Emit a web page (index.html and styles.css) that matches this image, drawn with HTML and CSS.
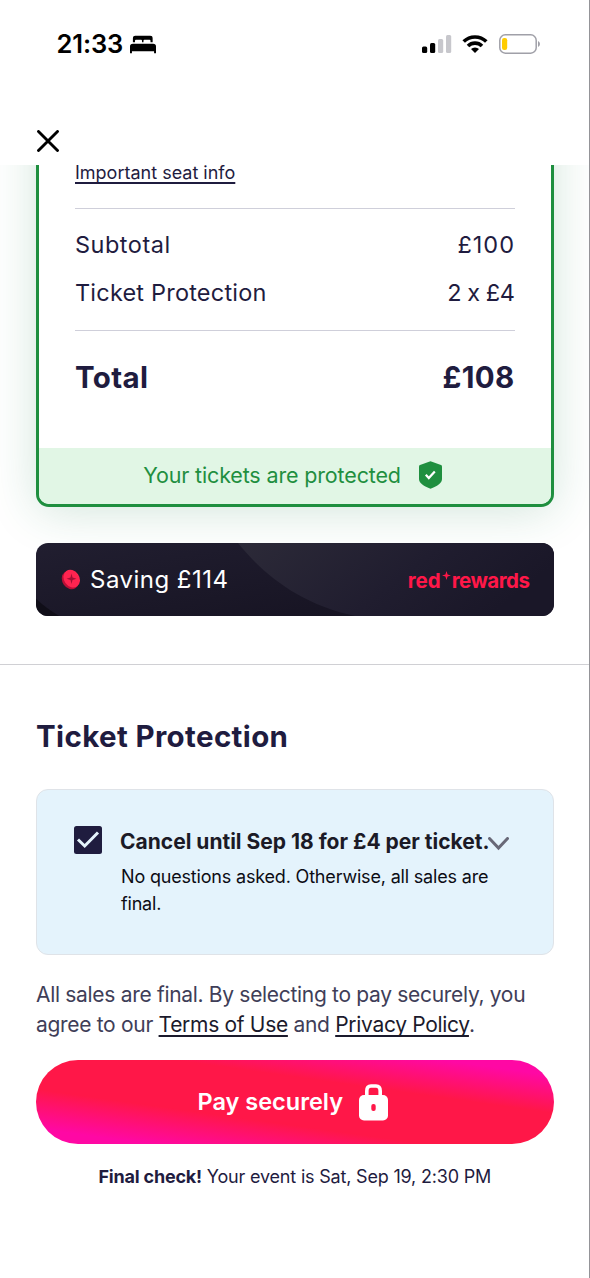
FILE: index.html
```html
<!DOCTYPE html>
<html lang="en">
<head>
<meta charset="utf-8">
<title>Checkout</title>
<link rel="stylesheet" href="styles.css">
</head>
<body>
<div class="screen">
  <header class="top">
    <div class="status">
      <span class="time">21:33</span>
      <svg class="bed" width="26" height="19" viewBox="0 0 27 19"><path d="M3 8V3.200C3 1.200 4 .5 5.500 .5h15.500C22.700 .5 23.500 1.200 23.500 3.200V7.200h-2.200V5.500q0-1-1-1h-5.300q-1 0-1 1v1.700h-1.500V5.500q0-1-1-1H6.200q-1 0-1 1v1.700H3z"/><path d="M0 18.500V11.500Q0 8.600 3 8.600h21q3 0 3 2.900v7h-2V16.500H2v2z"/></svg>
      <span class="grow"></span>
      <svg class="signal" width="30" height="20" viewBox="0 0 30 20"><g fill="#000"><rect x="0" y="12.500" width="5.200" height="6.500" rx="1.500"/><rect x="8" y="9" width="5.200" height="10" rx="1.500"/></g><g fill="#c7c7cc"><rect x="16" y="5" width="5.200" height="14" rx="1.500"/><rect x="24" y="1" width="5.200" height="18" rx="1.500"/></g></svg>
      <svg class="wifi" width="26" height="20" viewBox="0 0 26 20"><g fill="none" stroke="#000" stroke-width="3.600"><path d="M1.700 7.600a16 16 0 0 1 22.600 0"/><path d="M6 12a10 10 0 0 1 14 0"/></g><path d="M13 19l-4-3.900a5.800 5.800 0 0 1 8 0z"/></svg>
      <svg class="battery" width="42" height="20" viewBox="0 0 42 20"><rect x=".8" y=".8" width="36.400" height="18.400" rx="5.500" fill="none" stroke="#a0a0a8" stroke-width="1.500"/><rect x="3" y="4" width="5.200" height="12" rx="2.200" fill="#ffcc00"/><path d="M39 7v6q2-1 2-3t-2-3z" fill="#a0a0a8"/></svg>
    </div>
    <svg class="close" width="22" height="22" viewBox="0 0 22 22"><path d="M1.500 1.500l19 19M20.500 1.500l-19 19"/></svg>
  </header>
  <main class="content">
    <section class="order">
      <div class="lines">
        <a class="seat">Important seat info</a>
        <div class="rows">
          <div class="row"><span class="subtotal">Subtotal</span><span class="price">£100</span></div>
          <div class="row"><span class="item">Ticket Protection</span><span class="quantity">2 x £4</span></div>
        </div>
        <div class="total"><span>Total</span><span>£108</span></div>
      </div>
      <div class="protected">
        <span>Your tickets are protected</span>
        <svg width="23" height="28" viewBox="0 0 23 28"><path fill="#1f8f3f" d="M11.500 .3L22 4q1 .4 1 1.500V18c0 4-5 7.500-11.500 9.700C5 25.500 0 22 0 18V5.500Q0 4.400 1 4z"/><path d="M6.800 13.800l3 3.300 6-6.600" fill="none" stroke="#fff" stroke-width="2.200"/></svg>
      </div>
    </section>
    <section class="saving">
      <svg class="swoosh" width="518" height="74" viewBox="0 0 518 73" preserveAspectRatio="none"><defs><linearGradient id="s" x1="0" y1="0" x2="1" y2="0.300"><stop offset="0" stop-color="#2c2a38"/><stop offset=".6" stop-color="#201d2f"/><stop offset="1" stop-color="#1a1728"/></linearGradient></defs><path fill="url(#s)" d="M202 0C228 32 266 62 324 73H518V0z"/><path fill="#100e18" d="M0 55Q12 66 25 73H0z"/></svg>
      <svg class="coin" width="20" height="21" viewBox="0 0 20 21"><ellipse cx="9.200" cy="11.200" rx="7.800" ry="9.600" transform="rotate(-35 9.200 11.200)" fill="#b80f36"/><ellipse cx="10.700" cy="9.600" rx="7.700" ry="9.400" transform="rotate(-35 10.700 9.600)" fill="#ff2450"/><path d="M10.500 4.500l1 4 4 1.200-4 1.200-1 4-1-4-4-1.200 4-1.200z" fill="#a30f34"/></svg>
      <span class="amount">Saving £114</span>
      <span class="grow"></span>
      <span class="brand"><span>red</span><svg width="9" height="9" viewBox="0 0 9 9"><path d="M4.500 0l1.100 3.400 3.400 1.100-3.400 1.100-1.100 3.400-1.100-3.400L0 4.500l3.400-1.100z"/></svg><span class="rewards">rewards</span></span>
    </section>
    <section class="protection">
      <h2>Ticket Protection</h2>
      <div class="option">
        <svg class="check" width="28" height="28" viewBox="0 0 28 28"><rect width="28" height="28" rx="2.500" fill="#1f1c3f"/><path d="M4 13.500l6.700 6.500L24 6.500" fill="none" stroke="#e4f3fc" stroke-width="3"/></svg>
        <div class="copy">
          <div class="offer"><span>Cancel until Sep 18 for £4 per ticket.</span><svg width="21" height="14" viewBox="0 0 21 14"><path d="M1.500 1.500l9 9.500 9-9.500" fill="none" stroke="#686877" stroke-width="3" stroke-linecap="round"/></svg></div>
          <p>No questions asked. Otherwise, all sales are<br>final.</p>
        </div>
      </div>
      <p class="legal">All sales are final. By selecting to pay securely, you<br>agree to our <a>Terms of Use</a> and <a>Privacy Policy</a>.</p>
      <button class="pay"><span>Pay securely</span><svg width="29" height="37" viewBox="0 0 29 37"><path d="M7.800 14V7Q7.800 2 12 2h5q4.200 0 4.200 5v7" fill="none" stroke="#fff" stroke-width="3.600"/><rect x="0" y="11" width="29" height="25.500" rx="5" fill="#fff"/><rect x="12.300" y="20" width="4.400" height="7" rx="2" fill="#ff1748"/></svg></button>
      <p class="final"><b>Final check!</b> Your event is Sat, Sep 19, 2:30 PM</p>
    </section>
  </main>
</div>
</body>
</html>
```
FILE: styles.css
```css
* { box-sizing: border-box; }
body { margin: 0; background: #fff; font-family: Inter, "Liberation Sans", sans-serif; color: #1f1c3f; }
h2, p { margin: 0; font-weight: inherit; }
.screen { width: 590px; height: 1278px; border-right: 1px solid #949498; overflow: hidden; display: flex; flex-direction: column; }
.grow { flex: 1; }
.top { position: relative; z-index: 1; background: #fff; height: 165px; flex: none; padding: 29px 47px 0 37px; }
.status { display: flex; align-items: center; height: 30px; padding-left: 19.500px; }
.time { font-size: 25.500px; font-weight: 600; letter-spacing: -.1px; color: #000; line-height: 30px; }
.bed { margin-left: 7px; }
.wifi { margin-left: 10px; }
.battery { margin-left: 11px; margin-right: 1px; }
.close { display: block; margin-top: 71px; fill: none; stroke: #000; stroke-width: 2.900; stroke-linecap: round; }

.content { flex: 1; padding: 0 35.500px 0 36px; }
.order { margin-top: -100px; border: 3px solid #1f8f3f; border-radius: 13px; box-shadow: 0 4px 48px rgba(31, 125, 75, .2); background: #fff; overflow: hidden; height: 441.500px; }
.lines { padding: 97px 36px 40.500px; }
.seat { display: block; height: 21px; line-height: 16px; font-size: 18px; text-decoration: underline; text-underline-offset: 2.500px; text-decoration-thickness: 1.500px; text-decoration-skip-ink: none; }
.rows { margin-top: 22px; border-top: 1.500px solid #cfcfda; border-bottom: 1.500px solid #cfcfda; padding: 11.500px 0 13px; }
.row { display: flex; justify-content: space-between; font-size: 23.500px; line-height: 48px; }
.subtotal { letter-spacing: .5px; }
.price { letter-spacing: 1px; margin-right: -.5px; }
.item { letter-spacing: .2px; }
.quantity { letter-spacing: -.45px; }
.total { display: flex; justify-content: space-between; margin-top: 16.500px; font-size: 29.500px; line-height: 60px; font-weight: 700; letter-spacing: .35px; }
.protected { height: 56px; padding: 0 4px 2px 0; background: #e1f6e5; color: #1f8f3f; font-size: 21.500px; letter-spacing: -.15px; display: flex; align-items: center; justify-content: center; gap: 18.500px; }

.saving { position: relative; margin-top: 36px; height: 73.500px; border-radius: 12px; overflow: hidden; background: linear-gradient(170deg, #211e30, #14111f); display: flex; align-items: center; padding: 0 24px 0 25px; }
.swoosh { position: absolute; inset: 0; }
.coin, .amount, .brand { position: relative; }
.amount { margin-left: 9px; color: #fff; font-size: 24px; letter-spacing: .48px; }
.brand { display: flex; align-items: center; margin-top: 3px; color: #ff1748; font-size: 20.500px; font-weight: 700; }
.brand svg { fill: #ff1748; margin: -11px 1px 0 1px; }
.rewards { letter-spacing: -.5px; }

.protection { margin: 48px -35.500px 0 -36px; border-top: 1.500px solid #d0d0d4; padding: 50.500px 35.500px 0 36px; }
h2 { font-size: 29.500px; font-weight: 700; line-height: 40px; letter-spacing: .37px; }
.option { display: flex; margin-top: 33px; height: 166.500px; background: #e4f3fc; border: 1.500px solid #dfe3e8; border-radius: 12px; padding: 36px 36px 0 37px; }
.copy { margin-left: 18px; flex: 1; }
.offer { display: flex; align-items: center; height: 30px; margin-top: 1px; white-space: nowrap; font-size: 21px; font-weight: 700; color: #1b1a26; }
.offer svg { flex: none; margin: 5px 0 0 -2px; }
.copy p { color: #0c0c14; font-size: 18px; line-height: 27px; letter-spacing: -.18px; padding: 6px 0 0 1px; white-space: nowrap; }
.legal { margin-top: 24.500px; font-size: 21px; line-height: 30px; letter-spacing: -.31px; color: #403e58; white-space: nowrap; }
.legal a { color: #1b1a2c; text-decoration: underline; text-decoration-skip-ink: none; text-underline-offset: 3px; text-decoration-thickness: 1.500px; }
.pay { margin: 20px 0 0; display: flex; align-items: center; justify-content: center; gap: 16px; width: 100%; height: 84px; border: 0; padding: 2px 10px 0 6px; border-radius: 42px; color: #fff; font: 600 23.500px Inter, sans-serif; background: linear-gradient(8deg, #ff08a4 10%, #ff1748 35%, #ff1748 66%, #ff08a4 90%); }
.pay span { margin-top: -2px; }
.final { margin-top: 20.500px; text-align: center; font-size: 18px; line-height: 26px; letter-spacing: -.19px; }
```
